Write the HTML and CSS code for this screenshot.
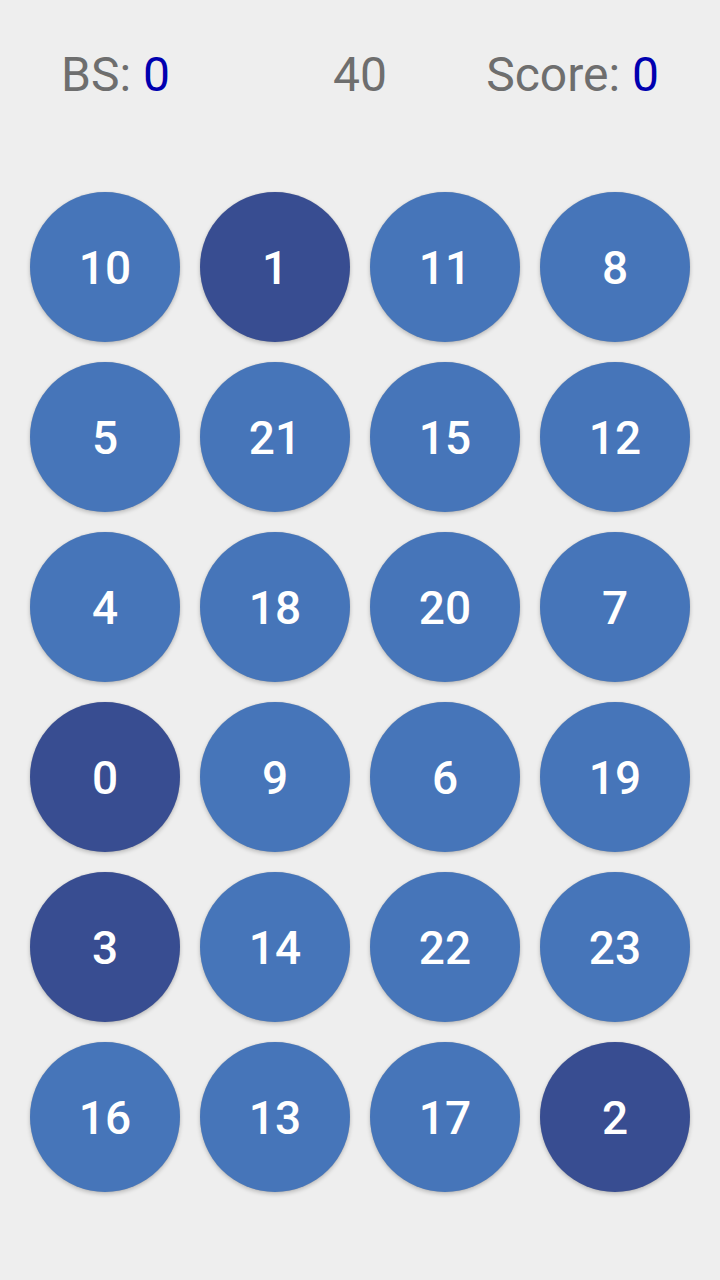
FILE: index.html
```html
<!DOCTYPE html>
<html>
<head>
<meta charset="utf-8">
<link rel="stylesheet" href="styles.css">
</head>
<body>
<div class="app">
  <div class="header">
    <div class="stat left">BS: <span class="val">0</span></div>
    <div class="stat mid">40</div>
    <div class="stat right">Score: <span class="val">0</span></div>
  </div>
  <div class="grid">
    <div class="ball">10</div><div class="ball dark">1</div><div class="ball">11</div><div class="ball">8</div>
    <div class="ball">5</div><div class="ball">21</div><div class="ball">15</div><div class="ball">12</div>
    <div class="ball">4</div><div class="ball">18</div><div class="ball">20</div><div class="ball">7</div>
    <div class="ball dark">0</div><div class="ball">9</div><div class="ball">6</div><div class="ball">19</div>
    <div class="ball dark">3</div><div class="ball">14</div><div class="ball">22</div><div class="ball">23</div>
    <div class="ball">16</div><div class="ball">13</div><div class="ball">17</div><div class="ball dark">2</div>
  </div>
</div>
</body>
</html>
```
FILE: styles.css
```css
html, body {
  margin: 0;
  padding: 0;
  background: #eeeeee;
}
body {
  font-family: Roboto, "Liberation Sans", sans-serif;
}
.app {
  width: 720px;
  height: 1280px;
  box-sizing: border-box;
}
.header {
  display: grid;
  grid-template-columns: 1fr auto 1fr;
  align-items: center;
  padding: 45px 61px 0 61px;
  height: 60px;
}
.stat {
  font-size: 48px;
  color: #6e6e6e;
  line-height: 60px;
  white-space: nowrap;
}
.left { justify-self: start; }
.mid { justify-self: center; }
.right { justify-self: end; }
.val { color: #0000b0; }
.grid {
  display: grid;
  grid-template-columns: repeat(4, 150px);
  grid-auto-rows: 150px;
  gap: 20px;
  padding: 87px 30px 0 30px;
}
.ball {
  width: 150px;
  height: 150px;
  box-sizing: border-box;
  padding-top: 2px;
  border-radius: 50%;
  background: #4675b9;
  color: #ffffff;
  font-size: 46px;
  font-weight: 500;
  display: flex;
  align-items: center;
  justify-content: center;
  box-shadow: 0 2px 4px rgba(0,0,0,0.22), 0 0 1px rgba(0,0,0,0.15);
}
.ball.dark {
  background: #384d91;
}
```
